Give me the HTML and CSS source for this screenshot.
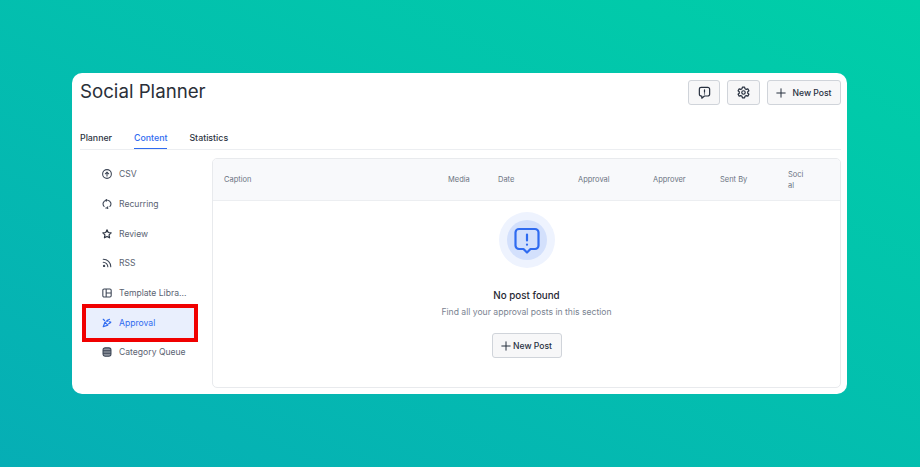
FILE: index.html
```html
<!DOCTYPE html>
<html lang="en">
<head>
    <meta charset="UTF-8">
    <title>Social Planner</title>
    <link rel="stylesheet" href="styles.css">
</head>
<body>
<div class="card">
    <div class="top">
        <h1>Social Planner</h1>
        <div class="actions">
            <button class="btn btn-icon">
                <svg width="13" height="13" viewBox="0 0 24 24" fill="none" stroke="#27303f" stroke-width="2.200" stroke-linejoin="round" stroke-linecap="round"><path d="M6 2.500h12a3.500 3.500 0 0 1 3.500 3.500v9a3.500 3.500 0 0 1-3.500 3.500h-6L7 22.500v-4H6A3.500 3.500 0 0 1 2.500 15V6A3.500 3.500 0 0 1 6 2.500z"/><path d="M12 7v4.500M12 14.500v.2"/></svg>
            </button>
            <button class="btn btn-icon btn-gear">
                <svg width="13" height="13" viewBox="0 0 24 24" fill="none" stroke="#27303f" stroke-width="2.200" stroke-linejoin="round"><circle cx="12" cy="12" r="3.200"/><path d="M10 2h4l.7 3 2.400 1.200 2.900-1 2 3.500-2.200 2v2.600l2.200 2-2 3.500-2.900-1-2.400 1.200-.7 3h-4l-.7-3-2.400-1.200-2.900 1-2-3.500 2.200-2v-2.600l-2.200-2 2-3.500 2.900 1L9.300 5z"/></svg>
            </button>
            <button class="btn btn-new">
                <svg width="10" height="10" viewBox="0 0 12 12" stroke="#27303f" stroke-width="1.200"><path d="M6 0.500v11M0.500 6h11"/></svg>
                New Post
            </button>
        </div>
    </div>

    <div class="tabs">
        <a class="tab">Planner</a>
        <a class="tab active">Content</a>
        <a class="tab">Statistics</a>
    </div>

    <div class="main">
        <div class="side">
            <div class="side-item">
                <svg width="10" height="10" viewBox="0 0 24 24" fill="none" stroke="#3d4656" stroke-width="2.600" stroke-linecap="round" stroke-linejoin="round"><circle cx="12" cy="12" r="10.500"/><path d="M12 17V8M8 11.500l4-4 4 4"/></svg>
                <span>CSV</span>
            </div>
            <div class="side-item">
                <svg width="10" height="10" viewBox="0 0 24 24" fill="none" stroke="#3d4656" stroke-width="2.600" stroke-linecap="round" stroke-linejoin="round"><path d="M5 18a9 9 0 0 1 5-15M14 3a9 9 0 0 1 5 15"/><path d="M10 1l2 2-2 2M14 23l-2-2 2-2M9 21.500h1"/></svg>
                <span>Recurring</span>
            </div>
            <div class="side-item">
                <svg width="10" height="10" viewBox="0 0 24 24" fill="none" stroke="#2c3442" stroke-width="2.800" stroke-linejoin="round"><path d="M12 2l3 6.500 7 .9-5.100 4.800 1.300 7L12 17.800l-6.200 3.400 1.300-7L2 9.400l7-.9z"/></svg>
                <span>Review</span>
            </div>
            <div class="side-item">
                <svg width="10" height="10" viewBox="0 0 24 24" fill="none" stroke="#3d4656" stroke-width="2.600" stroke-linecap="round"><path d="M3 3c10 0 18 8 18 18M3 10c6 0 11 5 11 11"/><circle cx="5" cy="19" r="1.500"/></svg>
                <span>RSS</span>
            </div>
            <div class="side-item">
                <svg width="10" height="10" viewBox="0 0 24 24" fill="none" stroke="#3d4656" stroke-width="2.600" stroke-linejoin="round"><rect x="2" y="2.500" width="20" height="19" rx="3"/><path d="M10 2.500v19M10 12h12"/></svg>
                <span>Template Libra...</span>
            </div>
            <div class="side-item selected">
                <svg width="10" height="10" viewBox="0 0 24 24" fill="none" stroke="#2f6bf0" stroke-width="2.800" stroke-linecap="round" stroke-linejoin="round"><path d="M3 21l4-11 7 7z"/><path d="M3 3l3 3M10 8l8-5M16 14l5-3M13 5l1 3M18 9l3 1"/></svg>
                <span>Approval</span>
            </div>
            <div class="side-item">
                <svg width="10" height="10" viewBox="0 0 24 24" fill="#8d939d" stroke="#3d4656" stroke-width="2.600"><rect x="2.500" y="2" width="19" height="20" rx="5"/><path d="M2.500 9h19M2.500 15h19"/></svg>
                <span>Category Queue</span>
            </div>
        </div>

        <div class="panel">
            <div class="thead">
                <span>Caption</span>
                <span>Media</span>
                <span>Date</span>
                <span>Approval</span>
                <span>Approver</span>
                <span>Sent By</span>
                <span>Soci<br>al</span>
            </div>
            <div class="empty">
                <div class="halo">
                    <div class="halo-inner">
                        <svg width="28" height="28" viewBox="0 0 28 28" fill="none" stroke="#2f6bf0" stroke-width="2.200" stroke-linejoin="round" stroke-linecap="round"><path d="M6 3h16a3.500 3.500 0 0 1 3.500 3.500v13A3.500 3.500 0 0 1 22 23h-4.500L14 26.500 10.500 23H6a3.500 3.500 0 0 1-3.500-3.500v-13A3.500 3.500 0 0 1 6 3z"/><path d="M14 8.500v6M14 18.500v.2"/></svg>
                    </div>
                </div>
                <h2>No post found</h2>
                <p>Find all your approval posts in this section</p>
                <button class="btn btn-empty">
                    <svg width="10" height="10" viewBox="0 0 12 12" stroke="#27303f" stroke-width="1.200"><path d="M6 0.500v11M0.500 6h11"/></svg>
                    New Post
                </button>
            </div>
        </div>
    </div>
</div>
</body>
</html>
```

FILE: styles.css
```css
html, body {
    height: 100%;
}

body {
    margin: 0;
    font-family: 'Inter', sans-serif;
    background: linear-gradient(26deg, #06aeb5 0%, #00cfa8 100%);
    display: flex;
    flex-direction: column;
    overflow: hidden;
}

.card {
    box-sizing: border-box;
    width: 775px;
    height: 321px;
    margin: 73px 0 0 72px;
    padding: 7px 6px 6px 8px;
    background: #fff;
    border-radius: 10px;
    display: flex;
    flex-direction: column;
}

.top {
    display: flex;
    justify-content: space-between;
    height: 48px;
}

h1 {
    margin: 0;
    font-size: 18.700px;
    line-height: 24px;
    font-weight: 400;
    color: #2a2f38;
}

.actions {
    display: flex;
    gap: 7px;
}

.btn {
    box-sizing: border-box;
    height: 25px;
    background: #f7f7f8;
    border: 1px solid #d0d4da;
    border-radius: 3px;
    color: #27303f;
    font-family: inherit;
    font-weight: 500;
    font-size: 8.600px;
    display: flex;
    align-items: center;
    justify-content: center;
    padding: 0;
}

.btn-icon {
    width: 32px;
}

.btn-gear {
    width: 33px;
}

.btn-new {
    width: 74px;
    gap: 6px;
}

.tabs {
    display: flex;
    gap: 22px;
    height: 21px;
    border-bottom: 1px solid #eceef1;
}

.tab {
    font-size: 8.800px;
    font-weight: 500;
    line-height: 14px;
    color: #2b3341;
    height: 21px;
    box-sizing: border-box;
    padding-top: 3px;
}

.tab.active {
    color: #2f6bf0;
    border-bottom: 1px solid #2f6bf0;
}

.main {
    display: flex;
    flex: 1;
    padding-top: 8px;
    min-height: 0;
}

.side {
    width: 132px;
    flex-shrink: 0;
    display: flex;
    flex-direction: column;
    padding-top: 1.500px;
}

.side-item {
    box-sizing: border-box;
    width: 116px;
    height: 29.700px;
    margin-left: 2px;
    padding-left: 20px;
    display: flex;
    align-items: center;
    gap: 7px;
    font-size: 8.600px;
    color: #5b6372;
    white-space: nowrap;
}

.side-item.selected {
    height: 38px;
    margin: -4px 0 -4.300px 2px;
    padding-left: 16px;
    background: #e9effd;
    border: 4px solid #f00000;
    color: #2f6bf0;
}

.panel {
    flex: 1;
    border: 1px solid #e8eaed;
    border-radius: 5px;
    display: flex;
    flex-direction: column;
    overflow: hidden;
}

.thead {
    height: 41px;
    flex-shrink: 0;
    background: #f8f9fb;
    border-bottom: 1px solid #eceef1;
    display: grid;
    grid-template-columns: 224px 50px 80px 75px 67px 68px 1fr;
    padding-left: 11px;
    align-items: center;
    font-size: 7.500px;
    line-height: 11px;
    color: #6b7482;
}

.empty {
    flex: 1;
    display: flex;
    flex-direction: column;
    align-items: center;
    padding-top: 11px;
}

.halo {
    width: 56px;
    height: 56px;
    border-radius: 50%;
    background: #eef3fe;
    display: flex;
    align-items: center;
    justify-content: center;
}

.halo-inner {
    width: 40px;
    height: 40px;
    border-radius: 50%;
    background: #d3e0fc;
    display: flex;
    align-items: center;
    justify-content: center;
}

h2 {
    margin: 21px 0 0;
    font-size: 9.800px;
    line-height: 14px;
    font-weight: 500;
    color: #1f2733;
}

.empty p {
    margin: 2px 0 0;
    font-size: 8.600px;
    line-height: 14px;
    color: #7a8391;
}

.btn-empty {
    width: 70px;
    margin-top: 14px;
    gap: 2px;
}
```
